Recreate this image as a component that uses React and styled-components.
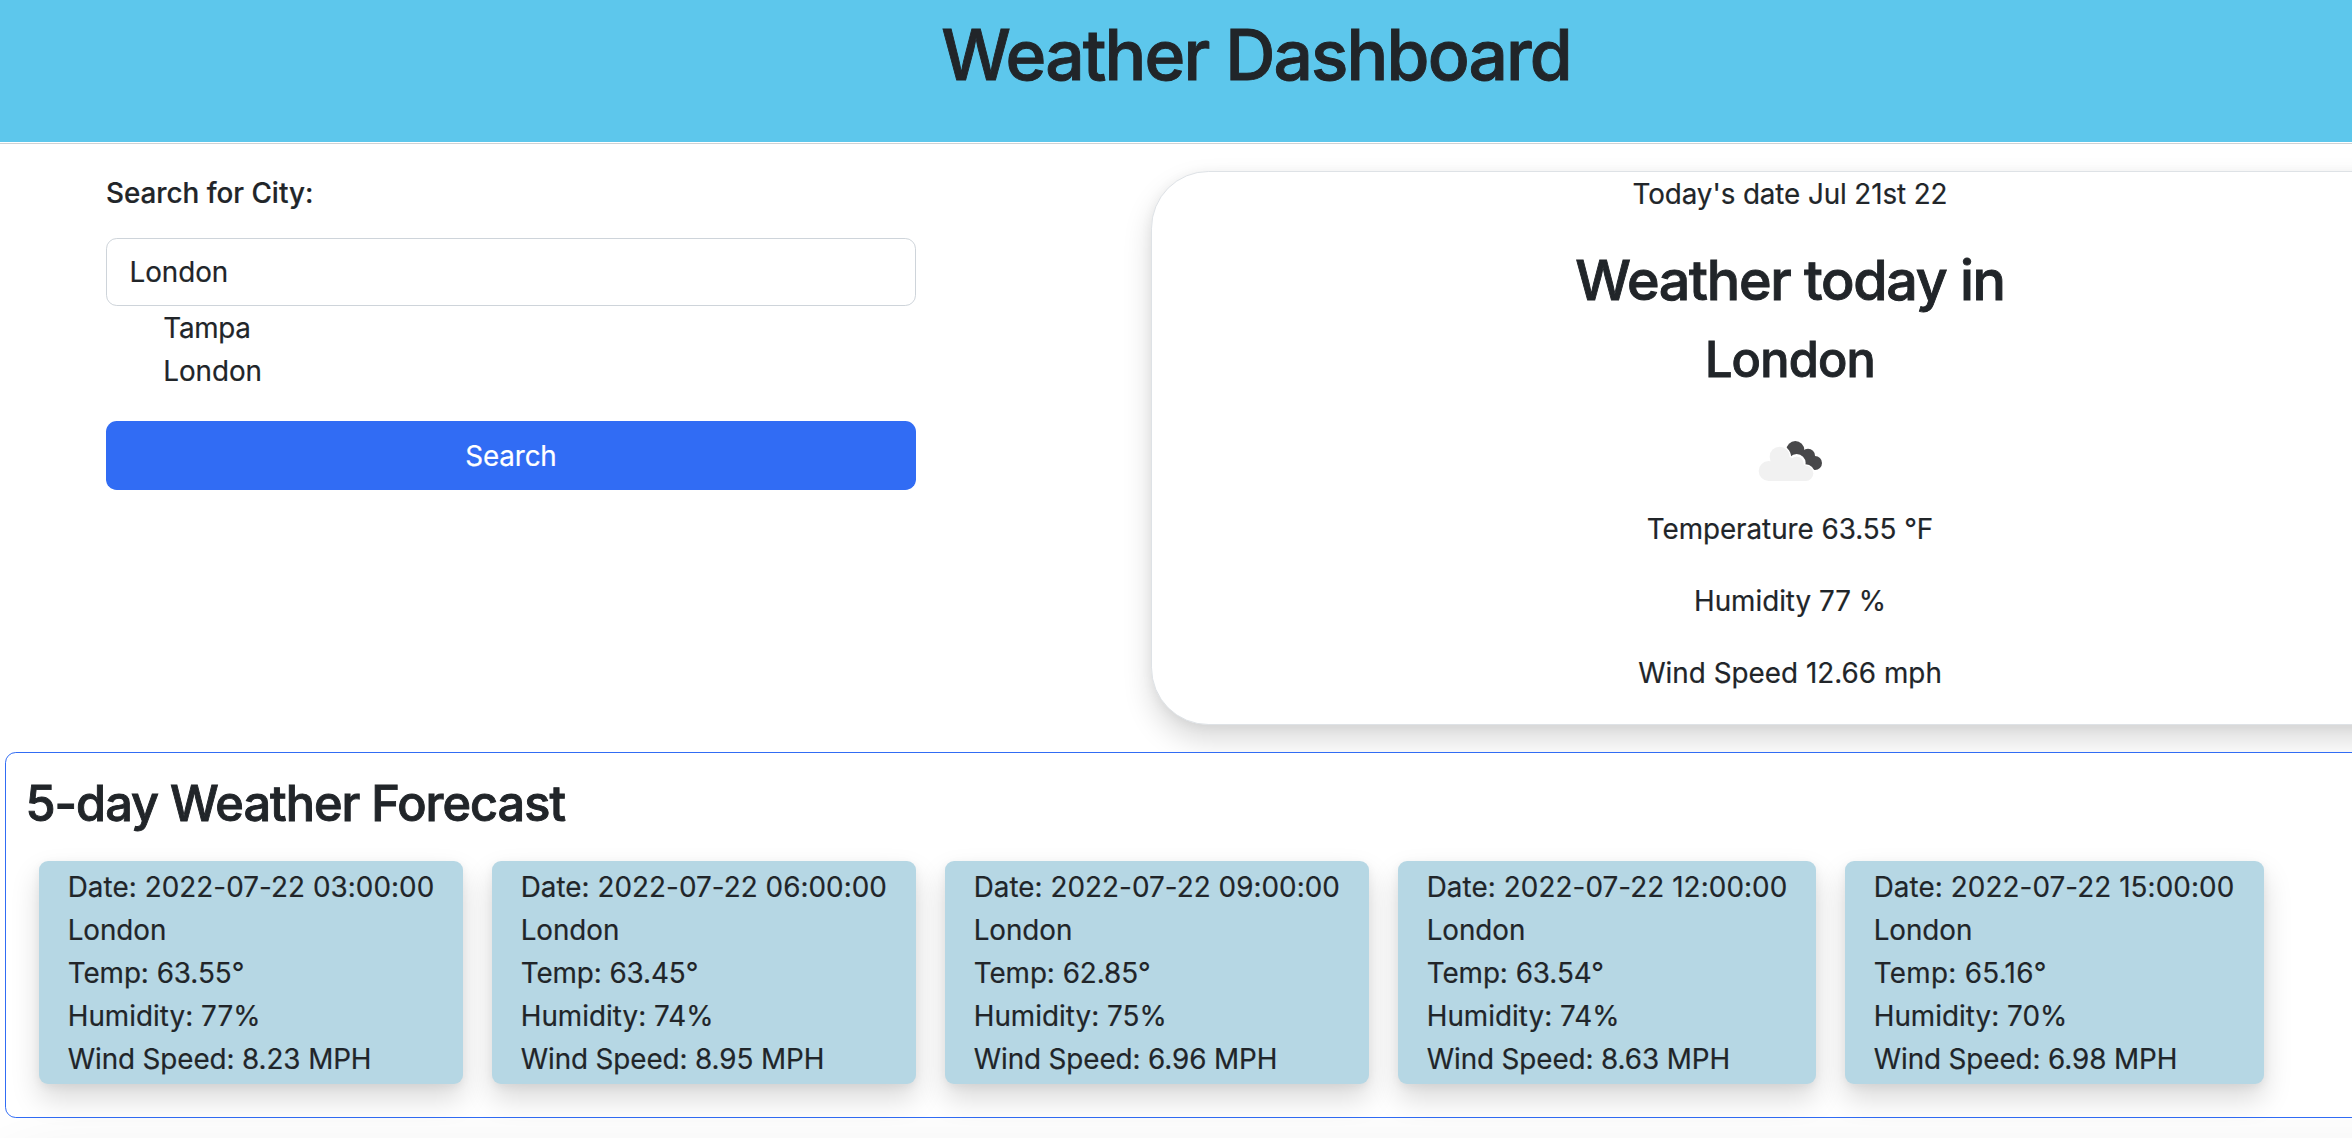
import React from 'react';
import styled, { createGlobalStyle } from 'styled-components';

const GlobalStyle = createGlobalStyle`
  *, *::before, *::after { box-sizing: border-box; }
  html, body { margin: 0; padding: 0; }
  body {
    height: 1138px;
    overflow: hidden;
    background: #fff;
    color: #212529;
    font-family: Inter, "Liberation Sans", sans-serif;
    font-size: 27.8px;
    line-height: 43px;
    -webkit-text-stroke: 0.2px currentColor;
  }
  h1, h2, h3 { -webkit-text-stroke: 0.9px currentColor; }
`;

const Page = styled.div`
  width: 2512px;
  height: 1138px;
  overflow: hidden;
`;

const Header = styled.header`
  height: 144px;
  padding-top: 12px;
  background: linear-gradient(#5dc7ec 142px, #fff 142px, #fff 143px, #cfd2d4 143px);
  text-align: center;
`;

const Title = styled.h1`
  margin: 0;
  font-size: 69.5px;
  font-weight: 500;
  line-height: 86px;
  letter-spacing: -1.87px;
`;

const Main = styled.main`
  display: flex;
  align-items: flex-start;
  justify-content: space-between;
  padding: 27px 83px 0 106px;
`;

const SearchForm = styled.form`
  display: flex;
  flex-direction: column;
  width: 810px;
`;

const Label = styled.label`
  padding-top: 1px;
  margin-bottom: 23px;
  font-weight: 500;
`;

const CityInput = styled.input`
  height: 68px;
  padding: 0 22.5px;
  border: 1px solid #ced4da;
  border-radius: 10.75px;
  background: #fff;
  color: inherit;
  font: inherit;
  letter-spacing: -0.05px;
  outline: none;
`;

const History = styled.ul`
  margin: 0 0 28px;
  padding: 1px 0 0 57.3px;
  list-style: none;
`;

const HistoryItem = styled.li`
  letter-spacing: ${(p) => p.$tracking}px;
`;

const SearchButton = styled.button`
  height: 69px;
  padding: 1px 0 0;
  border: 0;
  border-radius: 10.75px;
  background: #316cf4;
  color: #fff;
  font: inherit;
  letter-spacing: -0.16px;
`;

const TodayCard = styled.section`
  display: flex;
  flex-direction: column;
  align-items: center;
  width: 1278px;
  height: 554px;
  padding-top: 1px;
  border: 1px solid #dee2e6;
  border-radius: 57.3px;
  background: #fff;
  box-shadow: 0 14.3px 28.7px rgba(0, 0, 0, 0.15), 0 2px 12px rgba(0, 0, 0, 0.05);
  text-align: center;
`;

const Reading = styled.p`
  margin: 0 0 28.8px;
  letter-spacing: ${(p) => p.$tracking}px;
`;

const TodayTitle = styled.h2`
  margin: 1.5px 0 15px;
  font-size: 55.6px;
  font-weight: 500;
  line-height: 68.8px;
  letter-spacing: -1.31px;
`;

const TodayCity = styled.h3`
  margin: 0;
  font-size: 48.66px;
  font-weight: 500;
  line-height: 60.2px;
  letter-spacing: -0.78px;
`;

const IconFrame = styled.div`
  display: flex;
  height: 118px;
  padding: 48.6px 0 0 0;
`;

const Forecast = styled.section`
  position: relative;
  z-index: 1;
  height: 366px;
  margin: 27px 0 0 5px;
  padding: 20.5px 0 0 19.5px;
  border: 1px solid #316cf4;
  border-radius: 10.75px;
  background: #fff;
`;

const ForecastTitle = styled.h3`
  margin: 0 0 27.5px;
  font-size: 48.66px;
  font-weight: 500;
  line-height: 60.2px;
  letter-spacing: -1px;
`;

const Days = styled.div`
  display: grid;
  grid-template-columns: 424px 424px 424px 418px 419px;
  column-gap: 29px;
  padding-left: 13.5px;
`;

const DayCard = styled.article`
  height: 223px;
  padding: 5px 0 3px 28.7px;
  border-radius: 9px;
  background: #b6d7e4;
  box-shadow: 0 14.3px 28.7px rgba(0, 0, 0, 0.15), 0 3px 10px rgba(0, 0, 0, 0.06);
  white-space: nowrap;
`;

const DayLine = styled.div`
  letter-spacing: ${(p) => p.$tracking}px;
`;

const NextPanel = styled.footer`
  height: 100px;
  margin: 28px 0 0 5px;
  box-shadow: 0 28.7px 86px rgba(0, 0, 0, 0.12);
`;

const days = [
  { time: '03:00:00', temp: '63.55', humidity: 77, wind: '8.23', dateTracking: 0.07, tempTracking: -0.04 },
  { time: '06:00:00', temp: '63.45', humidity: 74, wind: '8.95', dateTracking: 0.05, tempTracking: -0.08 },
  { time: '09:00:00', temp: '62.85', humidity: 75, wind: '6.96', dateTracking: 0.05, tempTracking: -0.04 },
  { time: '12:00:00', temp: '63.54', humidity: 74, wind: '8.63', dateTracking: 0.09, tempTracking: -0.04 },
  { time: '15:00:00', temp: '65.16', humidity: 70, wind: '6.98', dateTracking: 0.09, tempTracking: 0.3 },
];

function BrokenClouds() {
  return (
    <svg width="68" height="44" viewBox="110 60 204 132" aria-hidden="true">
      <g fill="#48484a">
        <circle cx="228" cy="93" r="27" />
        <circle cx="266" cy="110" r="21" />
        <circle cx="287" cy="132" r="21" />
        <path d="M228 93L266 100L287 132L262 142L226 118Z" />
      </g>
      <g fill="#f1f1f1" stroke="#fff" strokeWidth="8">
        <circle cx="181" cy="113" r="30" />
        <circle cx="232" cy="132" r="23" />
        <circle cx="259" cy="163" r="23" />
      </g>
      <g fill="#f1f1f1">
        <circle cx="148" cy="156" r="30" />
        <circle cx="181" cy="113" r="30" />
        <circle cx="232" cy="134" r="21" />
        <circle cx="259" cy="163" r="23" />
        <path d="M148 186V130L200 108L240 128L262 142V186Z" />
      </g>
    </svg>
  );
}

export default function App() {
  return (
    <Page>
      <GlobalStyle />
      <Header>
        <Title>Weather Dashboard</Title>
      </Header>
      <Main>
        <SearchForm onSubmit={(e) => e.preventDefault()}>
          <Label htmlFor="city">Search for City:</Label>
          <CityInput id="city" type="text" defaultValue="London" />
          <History>
            <HistoryItem $tracking={-0.3}>Tampa</HistoryItem>
            <HistoryItem $tracking={-0.05}>London</HistoryItem>
          </History>
          <SearchButton type="submit">Search</SearchButton>
        </SearchForm>
        <TodayCard>
          <Reading $tracking={-0.1}>Today's date Jul 21st 22</Reading>
          <TodayTitle>Weather today in</TodayTitle>
          <TodayCity>London</TodayCity>
          <IconFrame>
            <BrokenClouds />
          </IconFrame>
          <Reading $tracking={-0.04}>Temperature 63.55 °F</Reading>
          <Reading $tracking={-0.02}>Humidity 77 %</Reading>
          <Reading $tracking={0.03}>Wind Speed 12.66 mph</Reading>
        </TodayCard>
      </Main>
      <Forecast>
        <ForecastTitle>5-day Weather Forecast</ForecastTitle>
        <Days>
          {days.map((d) => (
            <DayCard key={d.time}>
              <DayLine $tracking={d.dateTracking}>Date: 2022-07-22 {d.time}</DayLine>
              <DayLine $tracking={-0.05}>London</DayLine>
              <DayLine $tracking={d.tempTracking}>Temp: {d.temp}°</DayLine>
              <DayLine $tracking={0.04}>Humidity: {d.humidity}%</DayLine>
              <DayLine $tracking={-0.09}>Wind Speed: {d.wind} MPH</DayLine>
            </DayCard>
          ))}
        </Days>
      </Forecast>
      <NextPanel />
    </Page>
  );
}
